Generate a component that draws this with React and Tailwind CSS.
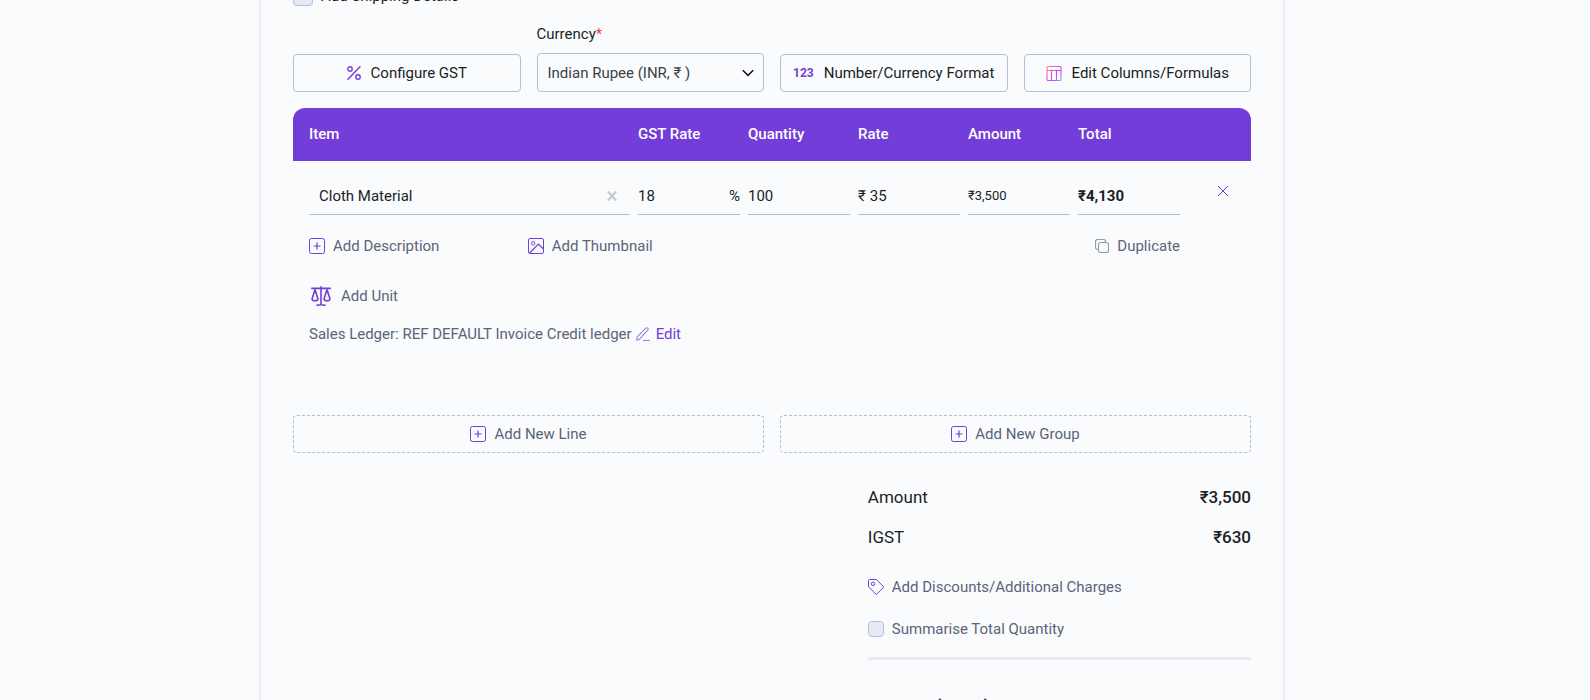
import { useState } from "react";

const COLUMNS = ["Item", "GST Rate", "Quantity", "Rate", "Amount", "Total"];

// =========================
// ICONS
// =========================
const PlusBoxIcon = () => (
  <svg width="16" height="16" viewBox="0 0 16 16" fill="none" aria-hidden="true">
    <rect x="0.5" y="0.5" width="15" height="15" rx="2" stroke="#733dd9" />
    <path d="M8 4.5v7M4.5 8h7" stroke="#733dd9" strokeWidth="1.2" />
  </svg>
);

const PercentIcon = () => (
  <svg
    width="14"
    height="14"
    viewBox="0 0 14 14"
    fill="none"
    stroke="#733dd9"
    strokeWidth="1.4"
    aria-hidden="true"
  >
    <circle cx="3" cy="3" r="2.2" />
    <circle cx="11" cy="11" r="2.2" />
    <path d="M13 0.7L1 13.3" strokeLinecap="round" />
  </svg>
);

const ColumnsIcon = () => (
  <svg width="16" height="16" viewBox="0 0 16 16" fill="none" aria-hidden="true">
    <defs>
      <linearGradient id="columns" x1="0" y1="0" x2="1" y2="1">
        <stop offset="0" stopColor="#ff8a7a" />
        <stop offset="0.4" stopColor="#e052e8" />
        <stop offset="0.7" stopColor="#c04cf0" />
        <stop offset="1" stopColor="#7fb2ff" />
      </linearGradient>
    </defs>
    <path
      d="M2 1.5h12a1 1 0 011 1v12a1 1 0 01-1 1H2a1 1 0 01-1-1v-12a1 1 0 011-1zM1 5.5h14M5.5 5.5v10M10.5 5.5v10"
      stroke="url(#columns)"
      strokeWidth="1.1"
    />
  </svg>
);

const ImageIcon = () => (
  <svg
    width="16"
    height="16"
    viewBox="0 0 16 16"
    fill="none"
    stroke="#733dd9"
    aria-hidden="true"
  >
    <rect x="0.5" y="0.5" width="15" height="15" rx="1.5" />
    <circle cx="5.2" cy="5.4" r="1.7" />
    <path d="M1.5 15L10.5 6l5 5" strokeWidth="1.2" />
  </svg>
);

const CopyIcon = () => (
  <svg
    width="14"
    height="14"
    viewBox="0 0 14 14"
    fill="none"
    stroke="#929bb0"
    strokeWidth="1.2"
    aria-hidden="true"
  >
    <rect x="3.5" y="3.5" width="10" height="10" rx="2" />
    <path d="M3.5 10.5H2.5a2 2 0 01-2-2v-6a2 2 0 012-2h6a2 2 0 012 2v1" />
  </svg>
);

const ScaleIcon = () => (
  <svg
    width="20"
    height="20"
    viewBox="0 0 20 20"
    fill="none"
    stroke="#733dd9"
    strokeWidth="1.6"
    strokeLinecap="round"
    strokeLinejoin="round"
    aria-hidden="true"
  >
    <path d="M10 0.8v18M0.8 2.4h18.4M6 19.2c1.5-.6 6.500-.6 8 0" />
    <path d="M4 3.5L1 13c.6 2.4 5.400 2.400 6 0zM16 3.500L13 13c.6 2.400 5.400 2.400 6 0z" />
  </svg>
);

const PencilIcon = () => (
  <svg
    width="14"
    height="14"
    viewBox="0 0 14 14"
    fill="none"
    stroke="#a07ae8"
    strokeWidth="1.1"
    strokeLinejoin="round"
    aria-hidden="true"
  >
    <path d="M1.2 9.8L9.8 1.2c1.3-1.3 3.2.6 2 2L3.5 12.2.7 13.2z" />
    <path d="M7 13.5h7" />
  </svg>
);

const TagIcon = () => (
  <svg
    width="16"
    height="16"
    viewBox="0 0 16 16"
    fill="none"
    stroke="#733dd9"
    strokeLinejoin="round"
    aria-hidden="true"
  >
    <path d="M0.5 1.5a1 1 0 011-1h6.8L15.2 7.3a1 1 0 010 1.4L9 14.9a1 1 0 01-1.4 0L.5 7.8z" />
    <circle cx="5" cy="4.8" r="1.7" />
  </svg>
);

const Checkbox = ({ className }) => (
  <input
    type="checkbox"
    className={`appearance-none shrink-0 rounded border border-[#b3c0da] bg-[#e7eaf6] checked:bg-[#733dd9] ${className}`}
  />
);

const ToolbarButton = ({ icon, children }) => (
  <button className="flex h-[38px] items-center justify-center gap-[10px] whitespace-nowrap rounded border border-[#b0bfd8] text-[#1b1e25]">
    {icon}
    {children}
  </button>
);

const AddButton = ({ children }) => (
  <button className="flex h-[38px] items-center justify-center gap-2 rounded border border-dashed border-[#b0bfd8]">
    <PlusBoxIcon />
    {children}
  </button>
);

const fieldClass =
  "flex h-[54px] items-center border-b border-[#b0bfd8] pt-4";

const App = () => {
  const [item, setItem] = useState({
    name: "Cloth Material",
    gst: "18",
    quantity: "100",
    rate: "35",
  });

  const update = (key) => (e) => setItem({ ...item, [key]: e.target.value });

  return (
    <div className="h-screen overflow-hidden bg-[#f9fbfd] pr-[46px] font-[Roboto,sans-serif] text-[15px] leading-5 text-[#5b6478]">
      <main className="mx-auto max-w-[1026px] border-x-2 border-[#eceef3] px-8">
        {/* SHIPPING */}
        <label className="-mt-[14px] flex w-fit items-center gap-2 text-[#1b1e25]">
          <Checkbox className="size-5" />
          Add Shipping Details
        </label>

        {/* TOOLBAR */}
        <div className="mt-[18px] grid grid-cols-4 items-end gap-4">
          <ToolbarButton icon={<PercentIcon />}>Configure GST</ToolbarButton>

          <div className="flex flex-col gap-[9px]">
            <label htmlFor="currency" className="text-[#1b1e25]">
              Currency<span className="text-[#f04444]">*</span>
            </label>
            <div className="relative">
              <select
                id="currency"
                className="h-[39px] w-full appearance-none rounded border border-[#b0bfd8] px-[10px] text-[#3b3f48]"
              >
                <option>Indian Rupee (INR, ₹ )</option>
              </select>
              <svg
                className="pointer-events-none absolute right-[10px] top-4"
                width="12"
                height="8"
                viewBox="0 0 12 8"
                fill="none"
                aria-hidden="true"
              >
                <path d="M0.8 1.2L6 6.4l5.2-5.2" stroke="#15181e" strokeWidth="1.6" />
              </svg>
            </div>
          </div>

          <ToolbarButton
            icon={
              <span className="text-xs font-bold text-[#733dd9]">123</span>
            }
          >
            Number/Currency Format
          </ToolbarButton>
          <ToolbarButton icon={<ColumnsIcon />}>
            Edit Columns/Formulas
          </ToolbarButton>
        </div>

        {/* LINE ITEMS */}
        <table className="mt-4 w-full table-fixed border-separate border-spacing-0 text-left">
          <colgroup>
            <col />
            <col className="w-[110px]" />
            <col className="w-[110px]" />
            <col className="w-[110px]" />
            <col className="w-[110px]" />
            <col className="w-[110px]" />
            <col className="w-[67px]" />
          </colgroup>
          <thead>
            <tr className="h-[53px] text-white">
              {COLUMNS.map((name) => (
                <th
                  key={name}
                  className="bg-[#733dd9] px-1 pb-[2px] font-medium first:rounded-tl-xl first:pl-4"
                >
                  {name}
                </th>
              ))}
              <th className="rounded-tr-xl bg-[#733dd9]" />
            </tr>
          </thead>
          <tbody className="text-[#1b1e25]">
            <tr>
              <td className="pl-4 pr-1">
                <div className={fieldClass}>
                  <input
                    aria-label="Item"
                    value={item.name}
                    onChange={update("name")}
                    className="min-w-0 flex-1 pl-[10px]"
                  />
                  <button
                    aria-label="Clear item"
                    onClick={() => setItem({ ...item, name: "" })}
                    className="mr-[13px]"
                  >
                    <svg width="10" height="10" viewBox="0 0 10 10" aria-hidden="true">
                      <path d="M1 0.5l8 9M9 0.5l-8 9" stroke="#c5c8d2" strokeWidth="2.2" />
                    </svg>
                  </button>
                </div>
              </td>
              <td className="px-1">
                <div className={fieldClass}>
                  <input
                    aria-label="GST Rate"
                    value={item.gst}
                    onChange={update("gst")}
                    className="min-w-0 flex-1"
                  />
                  <span>%</span>
                </div>
              </td>
              <td className="px-1">
                <div className={fieldClass}>
                  <input
                    aria-label="Quantity"
                    value={item.quantity}
                    onChange={update("quantity")}
                    className="min-w-0 flex-1"
                  />
                </div>
              </td>
              <td className="px-1">
                <div className={`${fieldClass} gap-1`}>
                  <span>₹</span>
                  <input
                    aria-label="Rate"
                    value={item.rate}
                    onChange={update("rate")}
                    className="min-w-0 flex-1"
                  />
                </div>
              </td>
              <td className="px-1">
                <div className={`${fieldClass} text-[13px]`}>₹3,500</div>
              </td>
              <td className="px-1">
                <div className={`${fieldClass} font-bold`}>₹4,130</div>
              </td>
              <td className="pl-[34px]">
                <button aria-label="Remove line" className="flex pt-[6px]">
                  <svg width="10" height="10" viewBox="0 0 10 10" aria-hidden="true">
                    <path d="M0 0l10 10M10 0L0 10" stroke="#733dd9" />
                  </svg>
                </button>
              </td>
            </tr>
          </tbody>
        </table>

        {/* LINE ACTIONS */}
        <div className="pl-4 pr-[71px]">
          <div className="mt-[21px] grid grid-cols-4 gap-1">
            <button className="flex items-center gap-2">
              <PlusBoxIcon />
              Add Description
            </button>
            <button className="flex items-center gap-2">
              <ImageIcon />
              Add Thumbnail
            </button>
            <button className="col-start-4 flex items-center gap-2 justify-self-end">
              <CopyIcon />
              Duplicate
            </button>
          </div>
          <button className="mt-[30px] flex items-center gap-[10px] pl-[2px]">
            <ScaleIcon />
            Add Unit
          </button>
          <div className="mt-[18px] flex items-center gap-1">
            Sales Ledger: REF DEFAULT Invoice Credit ledger
            <button className="flex items-center gap-[6px] text-[#733dd9]">
              <PencilIcon />
              Edit
            </button>
          </div>
        </div>

        <div className="mt-[71px] grid grid-cols-2 gap-4">
          <AddButton>Add New Line</AddButton>
          <AddButton>Add New Group</AddButton>
        </div>

        {/* TOTALS */}
        <div className="ml-auto mt-8 w-2/5">
          <dl className="flex flex-col gap-4 text-[17px] leading-6 text-[#1b1e25]">
            <div className="flex justify-between">
              <dt>Amount</dt>
              <dd className="font-medium">₹3,500</dd>
            </div>
            <div className="flex justify-between">
              <dt>IGST</dt>
              <dd className="font-medium">₹630</dd>
            </div>
          </dl>
          <button className="mt-[28px] flex items-center gap-2">
            <TagIcon />
            Add Discounts/Additional Charges
          </button>
          <label className="mt-[22px] flex w-fit items-center gap-2">
            <Checkbox className="size-4" />
            Summarise Total Quantity
          </label>
          <div className="mt-[18px] border-t-[3px] border-[#e9eaf2] pt-[34px] text-[26px] leading-8 font-medium text-[#1b1e25]">
            Total (INR)
          </div>
        </div>
      </main>
    </div>
  );
};

export default App;
